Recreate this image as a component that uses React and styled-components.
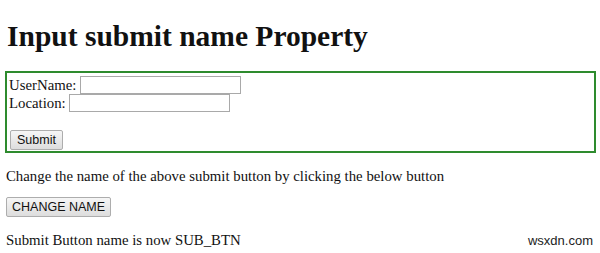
import styled, { createGlobalStyle } from 'styled-components';

const GlobalStyle = createGlobalStyle`
  html, body {
    margin: 0;
    background: #fff;
  }
  body {
    padding: 0 6px;
    font-family: "Liberation Serif", "Times New Roman", serif;
    font-size: 14.8px;
    color: #111;
  }
`;

export default function App() {
  return (
    <Page>
      <GlobalStyle />
      <Title>Input submit name Property</Title>
      <FormBox>
        <Field>
          UserName: <TextInput type="text" />
        </Field>
        <Field>
          Location: <TextInput type="text" />
        </Field>
        <Spacer />
        <PlainButton type="button">Submit</PlainButton>
      </FormBox>
      <Paragraph>Change the name of the above submit button by clicking the below button</Paragraph>
      <PlainButton type="button" $wide>CHANGE NAME</PlainButton>
      <Paragraph>Submit Button name is now SUB_BTN</Paragraph>
      <Watermark>wsxdn.com</Watermark>
    </Page>
  );
}

const Page = styled.div`
  position: relative;
  width: 590px;
  height: 252px;
  padding-top: 1px;
  box-sizing: border-box;
`;

const Title = styled.h1`
  font-size: 29.5px;
  font-weight: bold;
  margin: 18px 0 18px 1px;
  line-height: 34px;
`;

const FormBox = styled.form`
  border: 2px solid #2e8b2e;
  margin-left: -1px;
  padding: 3px 2px 1px;
  height: 82px;
  box-sizing: border-box;
  line-height: 18px;
`;

const Field = styled.div`
  height: 18px;
  display: flex;
  align-items: center;
  white-space: pre;
`;

const TextInput = styled.input`
  width: 155px;
  height: 16px;
  border: 1px solid #a9a9a9;
  padding: 0 2px;
  margin: 0;
  box-sizing: content-box;
`;

const Spacer = styled.div`
  height: 18px;
`;

const PlainButton = styled.button`
  font-family: "Liberation Sans", Arial, sans-serif;
  font-size: 12.5px;
  color: #111;
  height: 20px;
  padding: 0 ${(p) => (p.$wide ? '5px' : '6px')};
  margin: 0 0 0 ${(p) => (p.$wide ? '0' : '1px')};
  border: 1px solid #adadad;
  border-radius: 2px;
  background: linear-gradient(#f6f6f6, #dddddd);
  line-height: 18px;
`;

const Paragraph = styled.p`
  margin: 14px 0 12px;
  line-height: 18px;
`;

const Watermark = styled.span`
  position: absolute;
  right: 3px;
  bottom: 4px;
  font-family: "Liberation Sans", Arial, sans-serif;
  font-size: 13px;
  color: #222;
`;
